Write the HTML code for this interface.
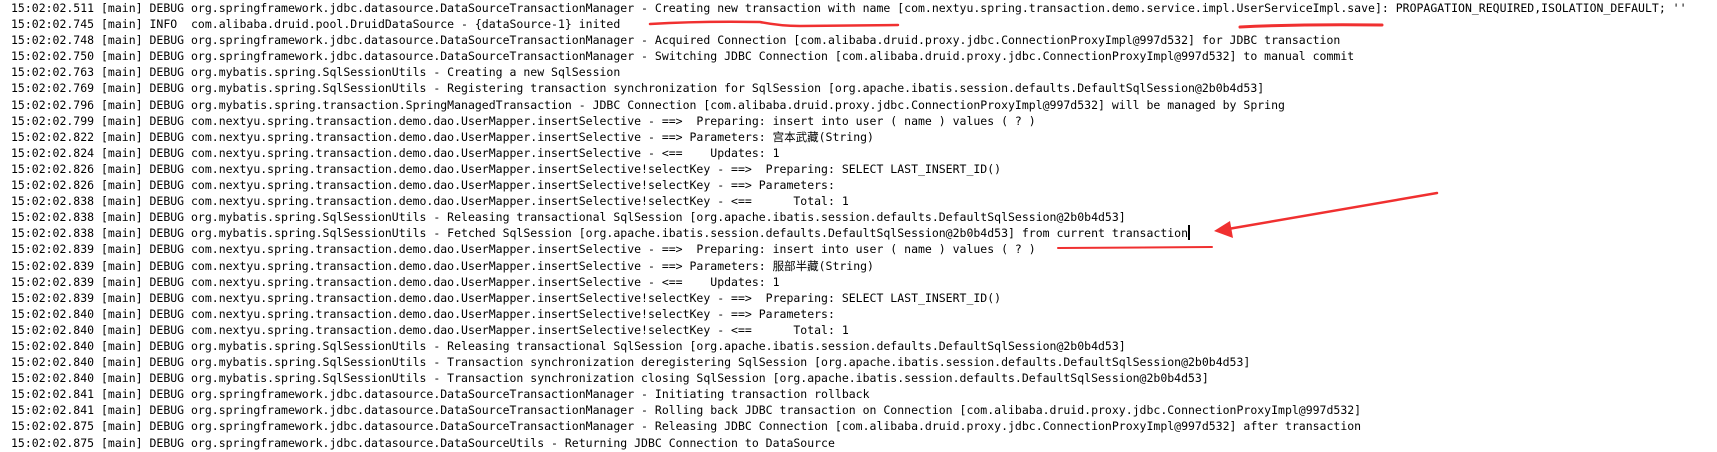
<!DOCTYPE html>
<html><head><meta charset="utf-8"><style>
html,body{margin:0;padding:0;background:#fff;width:1717px;height:452px;overflow:hidden;}
#log{position:absolute;left:11px;top:0px;font-family:"DejaVu Sans Mono","Noto Sans CJK SC",monospace;font-size:11.5px;line-height:16.1px;color:#000;white-space:pre;}
svg{position:absolute;left:0;top:0;}
.cur{display:inline-block;width:1.5px;height:15px;background:#000;vertical-align:-3px;}
</style></head><body>
<div id="log">15:02:02.511 [main] DEBUG org.springframework.jdbc.datasource.DataSourceTransactionManager - Creating new transaction with name [com.nextyu.spring.transaction.demo.service.impl.UserServiceImpl.save]: PROPAGATION_REQUIRED,ISOLATION_DEFAULT; ''
15:02:02.745 [main] INFO  com.alibaba.druid.pool.DruidDataSource - {dataSource-1} inited
15:02:02.748 [main] DEBUG org.springframework.jdbc.datasource.DataSourceTransactionManager - Acquired Connection [com.alibaba.druid.proxy.jdbc.ConnectionProxyImpl@997d532] for JDBC transaction
15:02:02.750 [main] DEBUG org.springframework.jdbc.datasource.DataSourceTransactionManager - Switching JDBC Connection [com.alibaba.druid.proxy.jdbc.ConnectionProxyImpl@997d532] to manual commit
15:02:02.763 [main] DEBUG org.mybatis.spring.SqlSessionUtils - Creating a new SqlSession
15:02:02.769 [main] DEBUG org.mybatis.spring.SqlSessionUtils - Registering transaction synchronization for SqlSession [org.apache.ibatis.session.defaults.DefaultSqlSession@2b0b4d53]
15:02:02.796 [main] DEBUG org.mybatis.spring.transaction.SpringManagedTransaction - JDBC Connection [com.alibaba.druid.proxy.jdbc.ConnectionProxyImpl@997d532] will be managed by Spring
15:02:02.799 [main] DEBUG com.nextyu.spring.transaction.demo.dao.UserMapper.insertSelective - ==>  Preparing: insert into user ( name ) values ( ? )
15:02:02.822 [main] DEBUG com.nextyu.spring.transaction.demo.dao.UserMapper.insertSelective - ==> Parameters: 宫本武藏(String)
15:02:02.824 [main] DEBUG com.nextyu.spring.transaction.demo.dao.UserMapper.insertSelective - &lt;==    Updates: 1
15:02:02.826 [main] DEBUG com.nextyu.spring.transaction.demo.dao.UserMapper.insertSelective!selectKey - ==>  Preparing: SELECT LAST_INSERT_ID()
15:02:02.826 [main] DEBUG com.nextyu.spring.transaction.demo.dao.UserMapper.insertSelective!selectKey - ==> Parameters: 
15:02:02.838 [main] DEBUG com.nextyu.spring.transaction.demo.dao.UserMapper.insertSelective!selectKey - &lt;==      Total: 1
15:02:02.838 [main] DEBUG org.mybatis.spring.SqlSessionUtils - Releasing transactional SqlSession [org.apache.ibatis.session.defaults.DefaultSqlSession@2b0b4d53]
15:02:02.838 [main] DEBUG org.mybatis.spring.SqlSessionUtils - Fetched SqlSession [org.apache.ibatis.session.defaults.DefaultSqlSession@2b0b4d53] from current transaction<span class="cur"></span>
15:02:02.839 [main] DEBUG com.nextyu.spring.transaction.demo.dao.UserMapper.insertSelective - ==>  Preparing: insert into user ( name ) values ( ? )
15:02:02.839 [main] DEBUG com.nextyu.spring.transaction.demo.dao.UserMapper.insertSelective - ==> Parameters: 服部半藏(String)
15:02:02.839 [main] DEBUG com.nextyu.spring.transaction.demo.dao.UserMapper.insertSelective - &lt;==    Updates: 1
15:02:02.839 [main] DEBUG com.nextyu.spring.transaction.demo.dao.UserMapper.insertSelective!selectKey - ==>  Preparing: SELECT LAST_INSERT_ID()
15:02:02.840 [main] DEBUG com.nextyu.spring.transaction.demo.dao.UserMapper.insertSelective!selectKey - ==> Parameters: 
15:02:02.840 [main] DEBUG com.nextyu.spring.transaction.demo.dao.UserMapper.insertSelective!selectKey - &lt;==      Total: 1
15:02:02.840 [main] DEBUG org.mybatis.spring.SqlSessionUtils - Releasing transactional SqlSession [org.apache.ibatis.session.defaults.DefaultSqlSession@2b0b4d53]
15:02:02.840 [main] DEBUG org.mybatis.spring.SqlSessionUtils - Transaction synchronization deregistering SqlSession [org.apache.ibatis.session.defaults.DefaultSqlSession@2b0b4d53]
15:02:02.840 [main] DEBUG org.mybatis.spring.SqlSessionUtils - Transaction synchronization closing SqlSession [org.apache.ibatis.session.defaults.DefaultSqlSession@2b0b4d53]
15:02:02.841 [main] DEBUG org.springframework.jdbc.datasource.DataSourceTransactionManager - Initiating transaction rollback
15:02:02.841 [main] DEBUG org.springframework.jdbc.datasource.DataSourceTransactionManager - Rolling back JDBC transaction on Connection [com.alibaba.druid.proxy.jdbc.ConnectionProxyImpl@997d532]
15:02:02.875 [main] DEBUG org.springframework.jdbc.datasource.DataSourceTransactionManager - Releasing JDBC Connection [com.alibaba.druid.proxy.jdbc.ConnectionProxyImpl@997d532] after transaction
15:02:02.875 [main] DEBUG org.springframework.jdbc.datasource.DataSourceUtils - Returning JDBC Connection to DataSource</div>
<svg width="1717" height="452" viewBox="0 0 1717 452">
<path d="M650 24 Q700 21 760 22 Q780 26 800 26 L898 25" stroke="#f03030" stroke-width="2.5" fill="none" stroke-linecap="round"/>
<path d="M1240 27 Q1300 24 1382 25" stroke="#f03030" stroke-width="3" fill="none" stroke-linecap="round"/>
<path d="M1058 248 L1212 247" stroke="#f03030" stroke-width="2" fill="none" stroke-linecap="round"/>
<path d="M1437 193 L1228 229" stroke="#f03030" stroke-width="2.5" fill="none" stroke-linecap="round"/>
<path d="M1214 231 L1230 221 L1233 238 Z" fill="#f03030"/>
</svg>
</body></html>
